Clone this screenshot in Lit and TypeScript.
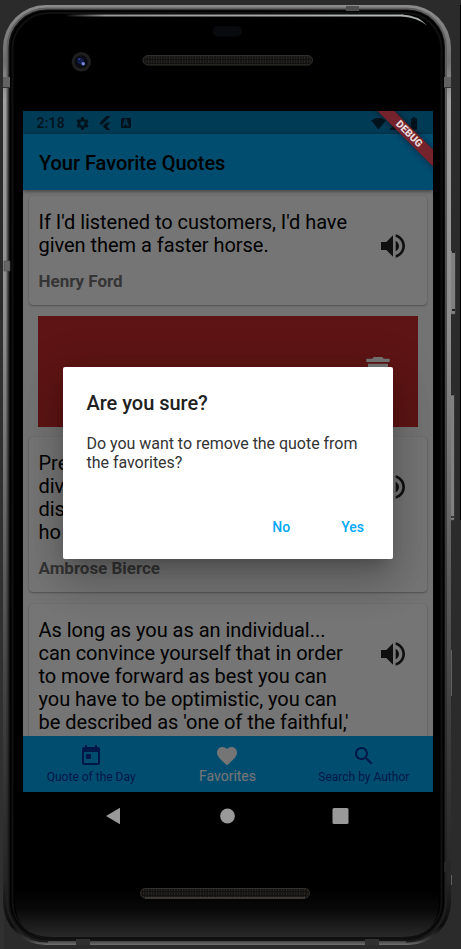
import { LitElement, html, css, svg } from "lit";
import { customElement, property } from "lit/decorators.js";

const ICONS = {
  volume: "M3 9v6h4l5 5V4L7 9H3zm13.5 3c0-1.77-1.02-3.29-2.5-4.03v8.05c1.48-.73 2.5-2.25 2.5-4.02zM14 3.23v2.06c2.89.86 5 3.54 5 6.71s-2.11 5.85-5 6.71v2.06c4.01-.91 7-4.49 7-8.77s-2.99-7.86-7-8.77z",
  trash: "M6 19c0 1.1.9 2 2 2h8c1.1 0 2-.9 2-2V7H6v12zM19 4h-3.5l-1-1h-5l-1 1H5v2h14V4z",
  today: "M19 3h-1V1h-2v2H8V1H6v2H5c-1.11 0-1.99.9-1.99 2L3 19c0 1.1.89 2 2 2h14c1.1 0 2-.9 2-2V5c0-1.1-.9-2-2-2zm0 16H5V8h14v11zM7 10h5v5H7z",
  heart: "M12 21.35l-1.45-1.32C5.4 15.36 2 12.28 2 8.5 2 5.42 4.42 3 7.5 3c1.74 0 3.41.81 4.5 2.09C13.09 3.81 14.76 3 16.5 3 19.58 3 22 5.42 22 8.5c0 3.78-3.4 6.86-8.55 11.54L12 21.35z",
  search: "M15.5 14h-.79l-.28-.27C15.41 12.59 16 11.11 16 9.5 16 5.91 13.09 3 9.5 3S3 5.91 3 9.5 5.91 16 9.5 16c1.61 0 3.09-.59 4.23-1.57l.27.28v.79l5 4.99L20.49 19l-4.99-5zm-6 0C7.01 14 5 11.99 5 9.5S7.01 5 9.5 5 14 7.01 14 9.5 11.99 14 9.5 14z",
  gear: "M19.43 12.98c.04-.32.07-.64.07-.98s-.03-.66-.07-.98l2.11-1.65c.19-.15.24-.42.12-.64l-2-3.46c-.12-.22-.39-.3-.61-.22l-2.49 1c-.52-.4-1.08-.73-1.69-.98l-.38-2.65C14.46 2.18 14.25 2 14 2h-4c-.25 0-.46.18-.49.42l-.38 2.65c-.61.25-1.17.59-1.69.98l-2.49-1c-.23-.09-.49 0-.61.22l-2 3.46c-.13.22-.07.49.12.64l2.11 1.65c-.04.32-.07.65-.07.98s.03.66.07.98l-2.11 1.65c-.19.15-.24.42-.12.64l2 3.46c.12.22.39.3.61.22l2.49-1c.52.4 1.08.73 1.69.98l.38 2.65c.03.24.24.42.49.42h4c.25 0 .46-.18.49-.42l.38-2.65c.61-.25 1.17-.59 1.69-.98l2.49 1c.23.09.49 0 .61-.22l2-3.46c.12-.22.07-.49-.12-.64l-2.11-1.65zM12 15.5c-1.93 0-3.5-1.57-3.5-3.5s1.57-3.5 3.500-3.500 3.500 1.570 3.500 3.500-1.570 3.500-3.500 3.500z",
  flutter: "M14.3 0L2.3 12l3.7 3.7L21.7 0zM14.3 11.1L7.9 17.5l6.4 6.5h7.4l-6.5-6.5 6.5-6.4z",
  wifi: "M12 21.5L23.6 7C23.2 6.7 18.7 3 12 3S.8 6.7.4 7z",
  signal: "M2 22h20V2z",
  battery: "M15.7 4H14V2h-4v2H8.3C7.6 4 7 4.6 7 5.3v15.3C7 21.4 7.6 22 8.3 22h7.3c.8 0 1.4-.6 1.4-1.3V5.3C17 4.6 16.4 4 15.7 4z",
};
type IconName = keyof typeof ICONS;

const icon = (name: IconName, cls = "") =>
  html`<svg class="icon ${cls}" viewBox="0 0 24 24"><path d=${ICONS[name]}></path></svg>`;

/** One quote with its author and a read-aloud button. */
@customElement("quote-card")
export class QuoteCard extends LitElement {
  @property({ attribute: false }) lines: string[] = [];
  @property() author = "";

  static styles = css`
    :host {
      display: flex;
      align-items: flex-start;
      background: #fff;
      border-radius: 4px;
      box-shadow: 0 1px 2px rgba(0, 0, 0, 0.3), 0 0 1px rgba(0, 0, 0, 0.2);
      padding: 15px 18.5px 10px 9.5px;
      box-sizing: border-box;
    }
    .text { flex: 1; white-space: nowrap; }
    .line { font-size: 20px; line-height: 23px; letter-spacing: -0.04px; color: #000; }
    .author {
      margin-top: 14px;
      font-size: 17px;
      line-height: 20px;
      font-weight: 700;
      letter-spacing: -0.02px;
      color: #757575;
      padding-bottom: 4px;
    }
    .icon { width: 32px; height: 32px; margin-top: 19px; fill: #212121; }
  `;

  render() {
    return html`
      <div class="text">
        ${this.lines.map((l) => html`<div class="line">${l}</div>`)}
        <div class="author">${this.author}</div>
      </div>
      ${icon("volume")}
    `;
  }
}

/** The handset drawn around the screen. */
@customElement("phone-frame")
export class PhoneFrame extends LitElement {
  static styles = css`
    :host { display: block; }
    svg { display: block; width: 461px; height: 949px; }
  `;

  render() {
    return html`<svg viewBox="0 0 461 949">
      ${svg`
      <defs>
        <linearGradient id="rim" x1="0" y1="0" x2="0" y2="1">
          <stop offset="0" stop-color="#8c8c8c"/><stop offset=".06" stop-color="#6f6f6f"/>
          <stop offset=".1" stop-color="#a0a0a0"/><stop offset=".35" stop-color="#8c8c8c"/>
          <stop offset=".58" stop-color="#606060"/><stop offset=".75" stop-color="#404040"/>
          <stop offset=".93" stop-color="#262626"/><stop offset=".98" stop-color="#0c0c0c"/>
          <stop offset=".995" stop-color="#3a3a3a"/><stop offset="1" stop-color="#707070"/>
        </linearGradient>
        <linearGradient id="edge" x1="0" y1="0" x2="0" y2="1">
          <stop offset="0" stop-color="#606060"/><stop offset=".4" stop-color="#4a4a4a"/>
          <stop offset=".75" stop-color="#303030"/><stop offset="1" stop-color="#1c1c1c"/>
        </linearGradient>
        <linearGradient id="chin" x1="0" y1="0" x2="0" y2="1">
          <stop offset="0" stop-color="#000"/><stop offset=".4" stop-color="#080808"/>
          <stop offset="1" stop-color="#292929"/>
        </linearGradient>
        <linearGradient id="shine">
          <stop offset="0" stop-color="#aaa" stop-opacity="0"/><stop offset=".12" stop-color="#999"/>
          <stop offset="1" stop-color="#b8bcbc"/>
        </linearGradient>
        <pattern id="mesh" width="2.6" height="4" patternUnits="userSpaceOnUse">
          <rect width="2.6" height="4" fill="#131210"/><rect width="1" height="3" fill="#2a2722"/>
        </pattern>
      </defs>
      <rect width="461" height="949" fill="#2b2b2b"/>
      <rect y="320" width="4" height="629" fill="#303030"/>
      <rect x="460" y="5" width="1" height="515" fill="#000"/>
      <rect x="450.5" y="250.500" width="5" height="64" rx="1.5" fill="#808080" stroke="#303030" stroke-width=".8"/>
      <path d="M452 251.500H455M452 310H455M451 394H454M451 517H454" stroke="#1c1c1c" stroke-width="2"/>
      <rect x="450.5" y="393.500" width="4" height="127" rx="1.5" fill="#808080" stroke="#303030" stroke-width=".8"/>
      <path d="M451 394.500H454M451 517H454M452 252H455M452 310H455" stroke="#222" stroke-width="1.500"/>
      <rect x="451" y="650" width="1" height="46" fill="#606060"/>
      <rect x="451" y="875" width="1" height="10" fill="#606060"/>
      <rect x="3" y="5" width="448" height="940" rx="43" ry="43" fill="url(#rim)"/>
      <rect x="7.5" y="8.5" width="438.5" height="933" rx="39" fill="#111" stroke="url(#edge)" stroke-width="2"/>
      <rect x="10" y="10.5" width="434" height="928" rx="37" fill="#000"/>
      <rect x="12.5" y="13" width="429" height="925" rx="36" fill="none" stroke="#101010" stroke-width="2"/>
      <path d="M15 890H439V900Q439 937 402 937H52Q15 937 15 900Z" fill="url(#chin)"/>
      <rect x="65" y="14.5" width="338" height="2" fill="url(#shine)"/>
      <path d="M402 14.5Q418 15 427 25.5Q417 17.5 402 16.5Z" fill="#a8acac"/>
      <rect x="3" y="77" width="7" height="10" fill="#626262"/><rect x="444" y="77" width="7" height="10" fill="#626262"/>
      <path d="M3 87.5H10M444 87.5H451" stroke="#333"/>
      <rect x="4" y="261" width="6" height="10" fill="#666" stroke="#4c4c4c" stroke-width=".6"/>
      <rect x="346" y="6" width="13" height="5" fill="#505050"/>
      <rect x="444" y="862" width="7" height="10" fill="#262626"/>
      <path d="M48 942H406" stroke="#747474"/>
      <rect x="76" y="939" width="14" height="6" fill="#303030"/><rect x="365" y="939" width="14" height="6" fill="#303030"/>
      <rect x="212.5" y="26" width="29.5" height="10.5" rx="5" fill="#080a0e"/>
      <rect x="143" y="55.5" width="169.5" height="9.5" rx="4.7" fill="url(#mesh)" stroke="#31302c"/>
      <rect x="140.5" y="888.5" width="169" height="9.5" rx="4.7" fill="url(#mesh)" stroke="#31302c"/>
      <path d="M145 898H305" stroke="#55534f"/>
      <circle cx="81.3" cy="61.8" r="9.7" fill="#1e1e1e"/><circle cx="81.3" cy="61.8" r="6.5" fill="#090a12"/>
      <circle cx="80.5" cy="61" r="3.200" fill="#131d4c"/><circle cx="83.2" cy="63.8" r="1.8" fill="#7487d8"/>
      <circle cx="79" cy="59" r="1" fill="#2c4090"/>`}
    </svg>`;
  }
}

@customElement("app-root")
export class AppRoot extends LitElement {
  static styles = css`
    :host {
      display: block;
      position: relative;
      width: 461px;
      height: 949px;
      overflow: hidden;
      font-family: Roboto, "Liberation Sans", sans-serif;
    }
    phone-frame { position: absolute; inset: 0; }
    .device { position: relative; padding: 111px 28px 0 23px; }
    .screen {
      position: relative;
      height: 681px;
      overflow: hidden;
      display: flex;
      flex-direction: column;
      background: #fafafa;
    }
    .status {
      flex: none;
      height: 23px;
      background: #0281ba;
      display: flex;
      align-items: center;
      padding: 1px 13px 0 13.5px;
      box-sizing: border-box;
      font-size: 14px;
      font-weight: 500;
      letter-spacing: 0.2px;
      color: #012b40;
    }
    .status .icon { width: 15px; height: 15px; fill: #012b40; }
    .status .gear { margin-left: 10px; }
    .status .flutter { width: 14px; height: 14px; margin-left: 8px; }
    .badge {
      display: grid;
      place-items: center;
      width: 10px;
      height: 10px;
      margin-left: 9px;
      background: #012b40;
      color: #0281ba;
      border-radius: 1px;
      font-size: 9px;
      line-height: 10px;
      letter-spacing: 0;
      font-weight: 700;
    }
    .gap { flex: 1; }
    .status .signal { margin: 0 3px 0 2px; }
    .status .battery { width: 16px; margin-right: -2px; }
    .appbar {
      flex: none;
      height: 56px;
      display: flex;
      align-items: center;
      padding: 1px 0 0 16px;
      box-sizing: border-box;
      background: #03a9f4;
      box-shadow: 0 1px 4px rgba(0, 0, 0, 0.5);
      font-size: 20px;
      font-weight: 500;
      letter-spacing: -0.03px;
      color: #000;
      z-index: 1;
    }
    .list {
      flex: 1;
      min-height: 0;
      overflow: hidden;
      display: flex;
      flex-direction: column;
      padding: 6px 6px 0;
    }
    quote-card { flex: none; }
    .removing {
      flex: none;
      height: 111px;
      margin: 11px 9px 10px 8.5px;
      background: #cc2d2d;
      display: flex;
      align-items: center;
      justify-content: flex-end;
      padding-right: 20px;
      box-sizing: border-box;
    }
    .removing .icon { width: 40px; height: 40px; fill: #fff; }
    .next { margin-top: 12px; }
    .nav {
      flex: none;
      height: 56px;
      display: grid;
      grid-template-columns: repeat(3, 1fr);
      padding-right: 1px;
      background: #03a9f4;
      color: #00349c;
      z-index: 1;
    }
    .tab {
      display: flex;
      flex-direction: column;
      align-items: center;
      padding-top: 7.5px;
      font-size: 12px;
      line-height: 16px;
      white-space: nowrap;
    }
    .tab .icon { width: 24px; height: 24px; fill: currentColor; }
    .tab span { margin-top: 1.5px; }
    .tab.active { color: #fff; font-size: 14px; }
    .tab.active span { margin-top: 0; }
    .scrim {
      position: absolute;
      inset: 0;
      z-index: 2;
      background: rgba(0, 0, 0, 0.54);
      display: grid;
      place-items: center;
    }
    .dialog {
      width: 330.5px;
      height: 192.5px;
      margin: 23px 0.5px 0 0;
      box-sizing: border-box;
      padding: 24px 24px 0;
      background: #fff;
      border-radius: 2px;
      box-shadow: 0 11px 15px -7px rgba(0, 0, 0, 0.2), 0 24px 38px 3px rgba(0, 0, 0, 0.14),
        0 9px 46px 8px rgba(0, 0, 0, 0.12);
      color: #212121;
      white-space: nowrap;
    }
    .dialog h2 {
      margin: 0 0 19px;
      font-size: 20px;
      line-height: 24px;
      font-weight: 500;
      letter-spacing: -0.03px;
    }
    .dialog p { margin: 0; font-size: 16px; line-height: 19px; letter-spacing: -0.03px; color: #333; }
    .actions {
      display: flex;
      justify-content: flex-end;
      gap: 51px;
      margin-top: 47px;
      padding-right: 5px;
      font-size: 14px;
      line-height: 16px;
      font-weight: 500;
      color: #03a9f4;
    }
    .ribbon {
      position: absolute;
      z-index: 3;
      right: -36px;
      top: 17px;
      width: 120px;
      height: 12px;
      transform: rotate(45deg);
      background: #74222b;
      box-shadow: 0 0 6px rgba(0, 0, 0, 0.5);
      color: #e8dcdd;
      font-size: 10.2px;
      line-height: 12px;
      font-weight: 900;
      text-align: center;
    }
    .keys {
      display: flex;
      align-items: center;
      justify-content: space-between;
      height: 47px;
      padding: 0 84px 0 83px;
    }
    .keys svg { width: 17px; height: 18px; fill: #999; }
  `;

  render() {
    return html`
      <phone-frame></phone-frame>
      <div class="device">
        <div class="screen">
          <div class="status">
            <span>2:18</span>
            ${icon("gear", "gear")} ${icon("flutter", "flutter")}
            <span class="badge">A</span>
            <span class="gap"></span>
            ${icon("wifi")} ${icon("signal", "signal")} ${icon("battery", "battery")}
          </div>
          <div class="appbar">Your Favorite Quotes</div>
          <div class="list">
            <quote-card
              .lines=${["If I'd listened to customers, I'd have", "given them a faster horse."]}
              author="Henry Ford"
            ></quote-card>
            <div class="removing">${icon("trash")}</div>
            <quote-card .lines=${["Pre", "div", "dis", "ho"]} author="Ambrose Bierce"></quote-card>
            <quote-card
              class="next"
              .lines=${[
                "As long as you as an individual...",
                "can convince yourself that in order",
                "to move forward as best you can",
                "you have to be optimistic, you can",
                "be described as 'one of the faithful,'",
              ]}
            ></quote-card>
          </div>
          <div class="nav">
            <div class="tab">${icon("today")}<span>Quote of the Day</span></div>
            <div class="tab active">${icon("heart")}<span>Favorites</span></div>
            <div class="tab">${icon("search")}<span>Search by Author</span></div>
          </div>
          <div class="scrim">
            <div class="dialog">
              <h2>Are you sure?</h2>
              <p>Do you want to remove the quote from<br />the favorites?</p>
              <div class="actions"><span>No</span><span>Yes</span></div>
            </div>
          </div>
          <div class="ribbon">DEBUG</div>
        </div>
        <div class="keys">
          <svg viewBox="0 0 17 18"><path d="M0 9L14 .7V17.3z"></path></svg>
          <svg viewBox="0 0 17 18"><circle cx="8.5" cy="9" r="7.4"></circle></svg>
          <svg viewBox="0 0 17 18"><rect x=".5" y="1" width="16" height="16" rx="1.5"></rect></svg>
        </div>
      </div>
    `;
  }
}
